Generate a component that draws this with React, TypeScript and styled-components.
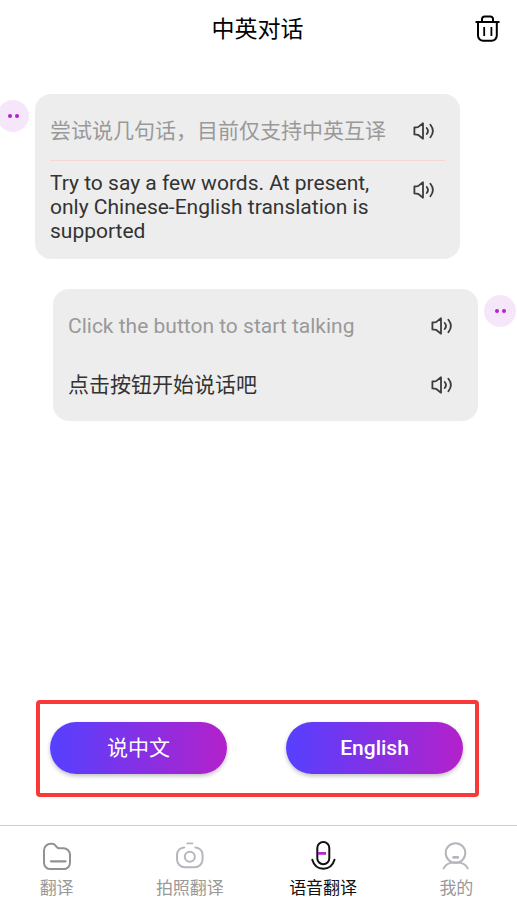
import React from "react";
import styled, { createGlobalStyle } from "styled-components";

const GlobalStyle = createGlobalStyle`
  *, *::before, *::after { box-sizing: border-box; }
  body {
    margin: 0;
    background: #fff;
    font-family: Roboto, "Noto Sans CJK SC", sans-serif;
  }
  button { font: inherit; border: 0; padding: 0; background: none; cursor: pointer; }
`;

const Page = styled.div`
  min-height: 100vh;
  display: flex;
  flex-direction: column;
  overflow-x: hidden;
`;

const Header = styled.header`
  display: grid;
  grid-template-columns: 1fr auto 1fr;
  align-items: center;
  height: 60px;
  padding: 0 13px 0 11px;
`;

const Title = styled.h1`
  grid-column: 2;
  margin: 0;
  font-size: 23px;
  line-height: 32px;
  font-weight: 400;
  color: #000;
`;

const ClearButton = styled.button`
  justify-self: end;
  width: 32px;
  height: 32px;
  color: #000;
  svg { display: block; }
`;

const Conversation = styled.main`
  flex: 1;
  display: flex;
  flex-direction: column;
  gap: 30px;
  padding-top: 34px;
`;

const Message = styled.article<{ $mine?: boolean }>`
  display: flex;
  flex-direction: ${(p) => (p.$mine ? "row-reverse" : "row")};
  align-items: flex-start;
  gap: 6px;
  margin: ${(p) => (p.$mine ? "0 1px 0 53px" : "0 57px 0 -3px")};
`;

const Avatar = styled.div`
  flex: none;
  display: flex;
  align-items: center;
  justify-content: center;
  gap: 3px;
  width: 32px;
  height: 32px;
  margin-top: 6px;
  border-radius: 50%;
  background: #f6e6fa;
`;

const Eye = styled.span`
  width: 4px;
  height: 4px;
  border-radius: 50%;
  background: #b222d0;
`;

const Card = styled.div`
  flex: 1;
  min-width: 0;
  padding: 8px 15px 7px;
  border-radius: 16px;
  background: #ededed;
`;

const Line = styled.div<{ $source?: boolean; $divided?: boolean }>`
  display: flex;
  align-items: flex-start;
  justify-content: space-between;
  border-bottom: ${(p) => (p.$source ? "1px solid" : "0")};
  border-color: ${(p) => (p.$divided ? "#f4d6d7" : "transparent")};
  color: ${(p) => (p.$source ? "#999" : "#333")};
`;

const Text = styled.p<{ $long?: boolean }>`
  flex: 1;
  margin: 0;
  padding: ${(p) => (p.$long ? "10px 0 9px" : "17px 0")};
  font-size: 21px;
  line-height: 24px;
`;

const SpeakButton = styled.button`
  flex: none;
  width: 24px;
  height: 58px;
  margin-right: 9px;
  color: #3c3c3c;
  svg { display: block; }
`;

const TalkBar = styled.section`
  display: flex;
  justify-content: space-between;
  gap: 16px;
  margin: 0 38px 28px 36px;
  padding: 18px 12px 19px 10px;
  border: 4px solid #fb3838;
  border-radius: 4px;
`;

const TalkButton = styled.button<{ $strong?: boolean }>`
  flex: 0 1 177px;
  height: 52px;
  border-radius: 26px;
  background: linear-gradient(90deg, #5540ff, #b321cb);
  box-shadow: 0 2px 4px rgba(0, 0, 0, 0.25);
  color: #fff;
  font-size: 21px;
  line-height: 24px;
  font-weight: ${(p) => (p.$strong ? 500 : 400)};
`;

const TabBar = styled.nav`
  border-top: 1px solid #ccc;
`;

const TabList = styled.div`
  display: grid;
  grid-template-columns: repeat(4, 1fr);
  margin: 0 -6px 0 -10px;
`;

const Tab = styled.a<{ $active?: boolean }>`
  display: flex;
  flex-direction: column;
  align-items: center;
  height: 73px;
  padding-top: 15px;
  color: ${(p) => (p.$active ? "#111" : "#999")};
  font-size: 17px;
  line-height: 22px;
  text-decoration: none;
  white-space: nowrap;
  svg { flex: none; margin-bottom: 6px; }
`;

const stroke = {
  fill: "none",
  strokeLinecap: "round" as const,
  strokeLinejoin: "round" as const,
  "aria-hidden": true,
};

const TrashIcon = () => (
  <svg width="32" height="32" viewBox="0 0 32 32" stroke="currentColor" strokeWidth="2" {...stroke}>
    <path d="M3.5 8h24" strokeLinecap="butt" />
    <path d="M10 8V5.2a2.6 2.6 0 0 1 2.6-2.7h5.8A2.6 2.6 0 0 1 21 5.2V8" />
    <path d="M6 8v13.5a5.200 5.200 0 0 0 5.200 5.200h8.400a5.200 5.200 0 0 0 5.200-5.200V8" />
    <path d="M12.200 13v9M19.400 13v9" strokeWidth="1.8" strokeLinecap="butt" />
  </svg>
);

const SpeakerIcon = () => (
  <svg width="24" height="24" viewBox="0 0 24 24" stroke="currentColor" strokeWidth="1.8" {...stroke}>
    <path d="M2.400 8.500 6 8.100 11 4.300v15.400L6 15.800l-3.600-.4Z" />
    <path d="M14.700 9q2.600 3 0 6" />
    <path d="M18.400 5.800q5 6.200 0 12.400" />
  </svg>
);

const FolderIcon = () => (
  <svg width="30" height="30" viewBox="0 0 30 30" stroke="#929292" strokeWidth="2" {...stroke}>
    <path d="M2 9.2a6.500 6.500 0 0 1 6.500-6.400h1.400c1.800 0 2.800.6 3.700 1.800l1.200 1.500c.7.9 1.400 1.200 2.600 1.200h4.200a6.400 6.400 0 0 1 6.400 6.400v8a6.400 6.400 0 0 1-6.400 6.400H8.400A6.400 6.400 0 0 1 2 21.700Z" />
    <path d="M9 20.300h14.500" strokeWidth="2.300" />
  </svg>
);

const CameraIcon = () => (
  <svg width="30" height="30" viewBox="0 0 30 30" stroke="#b7b5c0" strokeWidth="2" {...stroke}>
    <path d="M9.300 6.400A7.500 7.500 0 0 0 2 13.900v4.400a8 8 0 0 0 8 8h9.600a8 8 0 0 0 8-8v-4.400a7.500 7.500 0 0 0-7.300-7.500" />
    <path d="M12.200 2.400h5.300" strokeWidth="1.700" />
    <circle cx="14.800" cy="15.700" r="5" />
  </svg>
);

const MicIcon = () => (
  <svg width="30" height="30" viewBox="0 0 30 30" stroke="#111" strokeWidth="2" {...stroke}>
    <rect x="9.300" y="1" width="12" height="22.300" rx="6" />
    <path d="M4.300 18.800c1.600 5.600 5.700 9 11 9s9.500-3.400 11.200-9" />
    <path d="M10 12.400h8" stroke="#b52bd0" strokeWidth="2.800" strokeLinecap="butt" />
  </svg>
);

const PersonIcon = () => (
  <svg width="30" height="30" viewBox="0 0 30 30" stroke="#b7b5bc" strokeWidth="2" {...stroke}>
    <circle cx="14.500" cy="12" r="9.800" />
    <path d="M2.600 27.400c2-4 6.600-6.300 12-5.900 5.400-.4 10.200 1.900 12.200 5.900" />
    <path d="M12.600 16.400h4.200" strokeWidth="2.700" />
  </svg>
);

const Face = () => (
  <Avatar aria-hidden="true">
    <Eye />
    <Eye />
  </Avatar>
);

const Speak = ({ label }: { label: string }) => (
  <SpeakButton type="button" aria-label={label}>
    <SpeakerIcon />
  </SpeakButton>
);

const tabs = [
  { label: "翻译", href: "#translate", Icon: FolderIcon },
  { label: "拍照翻译", href: "#photo", Icon: CameraIcon },
  { label: "语音翻译", href: "#voice", Icon: MicIcon, active: true },
  { label: "我的", href: "#me", Icon: PersonIcon },
];

export default function App() {
  return (
    <Page lang="zh-CN">
      <GlobalStyle />
      <Header>
        <Title>中英对话</Title>
        <ClearButton type="button" aria-label="清空">
          <TrashIcon />
        </ClearButton>
      </Header>
      <Conversation>
        <Message>
          <Face />
          <Card>
            <Line $source $divided>
              <Text>尝试说几句话，目前仅支持中英互译</Text>
              <Speak label="朗读原文" />
            </Line>
            <Line>
              <Text $long>
                Try to say a few words. At present, only Chinese-English translation is supported
              </Text>
              <Speak label="朗读译文" />
            </Line>
          </Card>
        </Message>
        <Message $mine>
          <Face />
          <Card>
            <Line $source>
              <Text>Click the button to start talking</Text>
              <Speak label="朗读原文" />
            </Line>
            <Line>
              <Text>点击按钮开始说话吧</Text>
              <Speak label="朗读译文" />
            </Line>
          </Card>
        </Message>
      </Conversation>
      <TalkBar>
        <TalkButton type="button">说中文</TalkButton>
        <TalkButton type="button" $strong>
          English
        </TalkButton>
      </TalkBar>
      <TabBar>
        <TabList>
          {tabs.map(({ label, href, Icon, active }) => (
            <Tab key={href} href={href} $active={active} aria-current={active ? "page" : undefined}>
              <Icon />
              {label}
            </Tab>
          ))}
        </TabList>
      </TabBar>
    </Page>
  );
}
